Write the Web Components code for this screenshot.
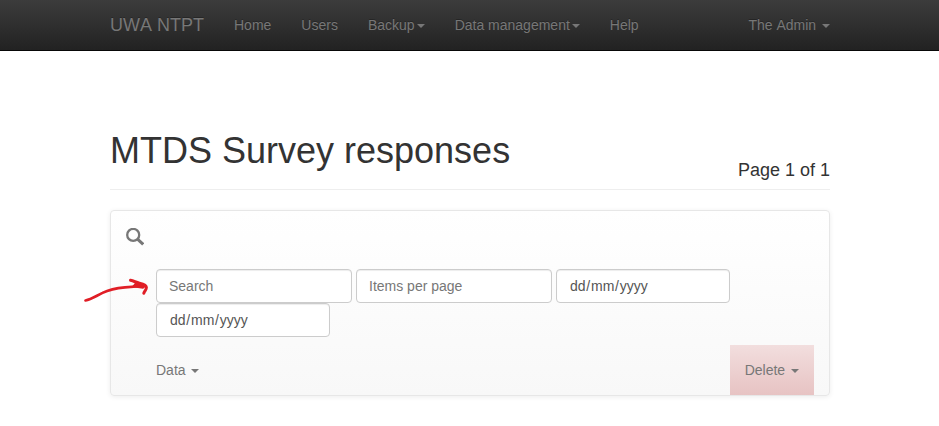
<!DOCTYPE html>
<html lang="en">
<head>
<meta charset="utf-8">
<title>MTDS Survey responses</title>
<style>
html,body{margin:0;background:#fff}
body{font:14px/20px "Liberation Sans",Arial,sans-serif;color:#333}
</style>
</head>
<body>
<app-page></app-page>
<script>
const define=(name,html)=>customElements.define(name,class extends HTMLElement{
  constructor(){
    super();
    const t=document.createElement('template');
    t.innerHTML=html;
    this.attachShadow({mode:'open'}).append(t.content.cloneNode(true));
  }
});

define('menu-caret',`<style>
:host{display:inline-block;width:0;height:0;margin-left:2px;vertical-align:middle;border-top:4px solid;border-left:4px solid transparent;border-right:4px solid transparent}
</style>`);

define('nav-link',`<style>
:host{display:block;padding:15px;line-height:20px;color:#777;white-space:nowrap}
</style><slot></slot>`);

define('nav-bar',`<style>
:host{display:block;height:50px;border-bottom:1px solid #080808;background:linear-gradient(#3c3c3c,#222)}
nav{display:flex;width:720px;margin-left:110px}
.brand{font-size:18px;line-height:20px;padding:15px 15px 15px 0;color:#777;white-space:nowrap;font-kerning:none}
.user{margin-left:auto;margin-right:-15px;font-kerning:none}
nav,.brand{text-shadow:0 -1px 0 rgba(0,0,0,.25)}
</style>
<nav><div class="brand">UWA NTPT</div>
<nav-link>Home</nav-link><nav-link>Users</nav-link><nav-link>Backup<menu-caret></menu-caret></nav-link><nav-link>Data management<menu-caret></menu-caret></nav-link><nav-link>Help</nav-link>
<nav-link class="user">The Admin <menu-caret></menu-caret></nav-link></nav>`);

define('page-header',`<style>
:host{display:flex;justify-content:space-between;align-items:flex-end;height:58px;border-bottom:1px solid #eee}
h1{font-size:36px;line-height:40px;margin:0 0 18px;white-space:nowrap}
h4{font-size:18px;line-height:20px;margin:0 0 9px;white-space:nowrap}
h1,h4{font-weight:400}
</style><h1><slot></slot></h1><h4><slot name="side"></slot></h4>`);

define('text-field',`<style>
:host{display:block;box-sizing:border-box;width:196px;height:34px;padding:6px 12px;border:1px solid #ccc;border-radius:4px;background:#fff;color:#777;line-height:20px;box-shadow:inset 0 1px 1px rgba(0,0,0,.075)}
:host([date]){width:174px;color:#555;padding-left:13px}
</style><slot></slot>`);

define('date-field',`<style>
:host{display:block}
i{font-style:normal;padding:0 .75px}
</style><text-field date>dd<i>/</i>mm<i>/</i>yyyy</text-field>`);

define('search-icon',`<style>
:host{display:block;width:18px;height:18px;color:#777}
svg{display:block}
</style><svg width="18" height="18" viewBox="0 0 18 18" fill="none" stroke="currentColor"><circle cx="7.2" cy="6.9" r="6" stroke-width="2.3"/><path d="M11.500 11.100L17.200 16.400" stroke-width="3"/></svg>`);

define('hand-arrow',`<style>
:host{position:absolute;left:82px;top:274px;width:68px;height:32px}
svg{display:block}
</style><svg width="68" height="32" viewBox="0 0 68 32" fill="none" stroke="#e01e26" stroke-linecap="round" stroke-linejoin="round"><path d="M3.500 26.500C9 25.500 14 22 20.500 18.900C27 15.500 34 14 43 13.300L60 12" stroke-width="2.700"/><path d="M48.500 6.300C52 7 54 8.500 57.500 9.200C61.500 10 64.500 10.800 64.400 13.500C64.300 16 62.500 17 61.800 19.200" stroke-width="3"/><path d="M54 9L63.500 12L61 14L51 12.500Z" fill="#e01e26" stroke-width="1.500"/></svg>`);

define('filter-panel',`<style>
:host{display:block;box-sizing:border-box;height:186px;margin-top:20px;border:1px solid #e7e7e7;border-radius:4px;background:linear-gradient(#fff,#f8f8f8);box-shadow:inset 0 1px 0 rgba(255,255,255,.15),0 1px 5px rgba(0,0,0,.075);padding:17px 15px 0}
.fields{display:flex;flex-wrap:wrap;column-gap:4px;margin:23px 0 0 30px;width:600px}
.actions{display:flex;justify-content:space-between;margin:8px 0 0 15px}
.danger{background:linear-gradient(#f2dede,#e7c3c3)}
</style>
<search-icon></search-icon>
<div class="fields"><text-field>Search</text-field><text-field>Items per page</text-field><date-field></date-field><date-field></date-field></div>
<div class="actions"><nav-link>Data <menu-caret></menu-caret></nav-link><nav-link class="danger">Delete <menu-caret></menu-caret></nav-link></div>`);

define('app-page',`<style>
:host{display:block;position:relative;height:426px;overflow:hidden}
main{width:720px;margin-left:110px;padding-top:80px}
</style>
<nav-bar></nav-bar>
<main><page-header>MTDS Survey responses<span slot="side">Page 1 of 1</span></page-header><filter-panel></filter-panel></main>
<hand-arrow></hand-arrow>`);
</script>
</body>
</html>
